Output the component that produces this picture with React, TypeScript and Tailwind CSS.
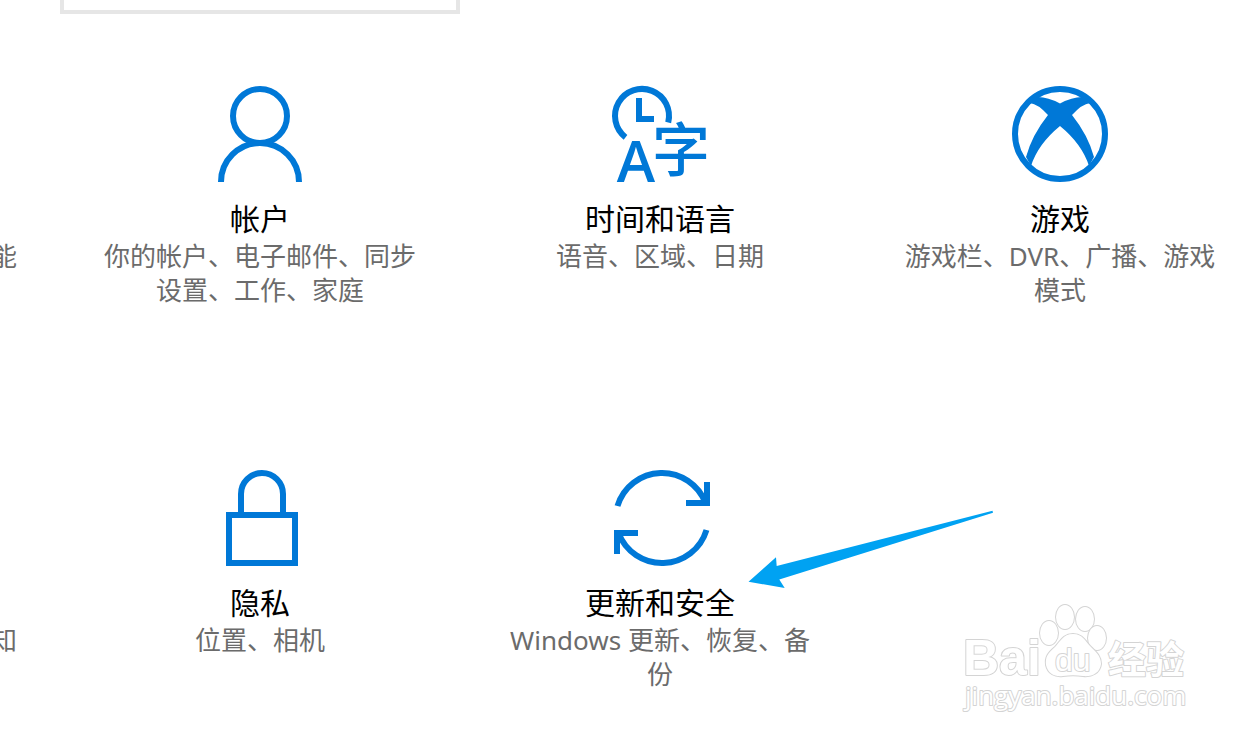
import type { ReactNode } from 'react';

interface Category {
  title: string;
  description: string;
  icon: ReactNode;
  pointer?: boolean;
}

function Icon({ children }: { children: ReactNode }) {
  return (
    <svg
      viewBox="0 0 96 96"
      className="size-24 overflow-visible text-[#0078d7]"
      fill="none"
      stroke="currentColor"
      strokeWidth={6}
      aria-hidden="true"
    >
      {children}
    </svg>
  );
}

const AccountIcon = () => (
  <Icon>
    <circle cx="48" cy="30" r="27" />
    <path d="M9 96A39 39 0 0 1 87 96" />
  </Icon>
);

const LanguageIcon = () => (
  <Icon>
    <path d="M13.5 51.3A27 27 0 1 1 56.2 36.5" />
    <path d="M27 12V33H42" />
    <g fill="currentColor" stroke="none">
      <text x="24" y="96" textAnchor="middle" className="font-['Open_Sans',sans-serif] text-[58px] font-semibold">
        A
      </text>
      <text x="69" y="85" textAnchor="middle" className="font-['Noto_Sans_CJK_SC',sans-serif] text-[58px] font-medium">
        字
      </text>
    </g>
  </Icon>
);

const GamingIcon = () => (
  <Icon>
    <circle cx="48" cy="48" r="45" />
    <path
      d="M18 17L26 11Q36 11 48 17.5Q60 11 70 11L78 17Q70 18 60 29Q76 49 82 71L77 80Q70 58 48 40Q26 58 19 80L14 71Q20 49 36 29Q26 18 18 17Z"
      fill="currentColor"
      stroke="none"
    />
  </Icon>
);

const PrivacyIcon = () => (
  <Icon>
    <rect x="17" y="45" width="66" height="48" />
    <path d="M29 45V24A21 21 0 0 1 71 24V45" />
  </Icon>
);

const UpdateIcon = () => (
  <Icon>
    <path d="M5.5 36A46.5 46.5 0 0 1 93.5 33" />
    <path d="M95 12V33H74" />
    <path d="M94.5 60A46.5 46.5 0 0 1 6.5 63" />
    <path d="M26 63H5V84" />
  </Icon>
);

const firstRow: Category[] = [
  { title: '帐户', description: '你的帐户、电子邮件、同步设置、工作、家庭', icon: <AccountIcon /> },
  { title: '时间和语言', description: '语音、区域、日期', icon: <LanguageIcon /> },
  { title: '游戏', description: '游戏栏、DVR、广播、游戏模式', icon: <GamingIcon /> },
];

const secondRow: Category[] = [
  { title: '隐私', description: '位置、相机', icon: <PrivacyIcon /> },
  { title: '更新和安全', description: 'Windows 更新、恢复、备份', icon: <UpdateIcon />, pointer: true },
];

function Pointer() {
  return (
    <svg viewBox="0 0 246 79" className="absolute top-10 left-72 h-[79px] w-[246px] text-[#00a2f2]" aria-hidden="true">
      <path d="M0.5 71.7L28 47.3L28.7 56L244.5 0.8L245 2.7L31.3 69.5L36.7 78Z" fill="currentColor" />
    </svg>
  );
}

function Tile({ title, description, icon, pointer }: Category) {
  return (
    <a href="#" className="relative flex flex-col items-center text-center">
      {icon}
      <h2 className="mt-[17px] text-[30px] leading-10 text-black">{title}</h2>
      <p className="w-80 text-[26px] leading-[34px] text-[#6b6b6b]">{description}</p>
      {pointer && <Pointer />}
    </a>
  );
}

// last character of the column that is scrolled off to the left
function ClippedTile({ text }: { text: string }) {
  return (
    <div className="flex justify-end pt-[153px] pr-[43px]">
      <p className="text-[26px] leading-[34px] text-[#6b6b6b]">{text}</p>
    </div>
  );
}

function Watermark() {
  return (
    <svg
      viewBox="0 0 230 112"
      className="absolute right-16 bottom-6 h-[112px] w-[230px]"
      fill="#fff"
      stroke="#d4d4d4"
      strokeWidth={2}
      paintOrder="stroke"
      strokeLinejoin="round"
      role="img"
      aria-label="Baidu 经验"
    >
      <text x="1" y="71" className="font-['Liberation_Sans',sans-serif] text-[50px] font-bold">
        Bai
      </text>
      <ellipse cx="87" cy="29" rx="9" ry="12" />
      <ellipse cx="103" cy="13" rx="9" ry="12" />
      <ellipse cx="123" cy="15" rx="9" ry="12" />
      <ellipse cx="135" cy="34" rx="9" ry="12" />
      <path d="M111 30C101 30 98 38 93 43C86 49 83 53 84 61C86 70 93 73 101 72C108 71 114 71 121 72C130 73 138 69 139 60C139 52 134 48 128 42C123 37 121 30 111 30Z" />
      <text x="93" y="67" className="font-['Liberation_Sans',sans-serif] text-[32px]">
        du
      </text>
      <text x="146" y="69" className="font-['Noto_Sans_CJK_SC',sans-serif] text-[38px] font-bold">
        经验
      </text>
      <text x="3" y="101" className="font-['Open_Sans',sans-serif] text-[26px] font-medium">
        jingyan.baidu.com
      </text>
    </svg>
  );
}

export default function App() {
  return (
    <main className="relative min-h-screen overflow-hidden bg-white font-['Noto_Sans','Noto_Sans_CJK_SC',sans-serif]">
      <div className="-mr-1 grid grid-cols-[60px_repeat(3,1fr)]">
        <div className="col-start-2 mb-18 h-3.5 border-4 border-t-0 border-[#e6e6e6]" />
      </div>
      <div className="-mr-1 grid auto-rows-[minmax(384px,auto)] grid-cols-[60px_repeat(3,1fr)]">
        <ClippedTile text="能" />
        {firstRow.map((c) => (
          <Tile key={c.title} {...c} />
        ))}
      </div>
      <div className="-mr-1 grid grid-cols-[60px_repeat(3,1fr)]">
        <ClippedTile text="知" />
        {secondRow.map((c) => (
          <Tile key={c.title} {...c} />
        ))}
      </div>
      <Watermark />
    </main>
  );
}
